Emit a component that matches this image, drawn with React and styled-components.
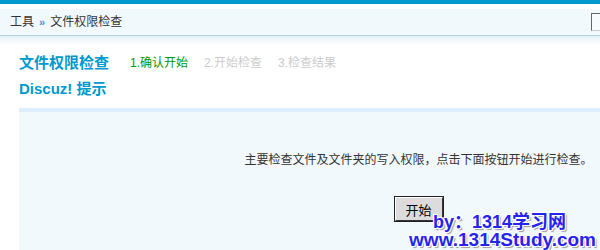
import React from "react";
import styled, { createGlobalStyle } from "styled-components";

const GlobalStyle = createGlobalStyle`
  html, body {
    margin: 0;
    padding: 0;
    background: #fff;
    overflow: hidden;
    height: 250px;
  }
  body {
    font-family: "Liberation Sans", "Noto Sans CJK SC", sans-serif;
    font-size: 12px;
    color: #333;
  }
`;

const Page = styled.div`
  position: relative;
  width: 600px;
  height: 250px;
  overflow: hidden;
`;

const TopStripe = styled.div`
  height: 4px;
  background: #0099cc;
  margin-bottom: 5px;
`;

const NavBar = styled.div`
  display: flex;
  align-items: center;
  height: 26px;
  padding-left: 10px;
  background: #f2f9fd;
  border-bottom: 1px solid #b4d2dc;
`;

const Crumbs = styled.div`
  display: flex;
  align-items: center;
  gap: 5px;
  line-height: 26px;
  color: #333;
`;

const Sep = styled.span`
  color: #4f8fd0;
  font-size: 11px;
  font-weight: bold;
`;

/* search field, only its left edge is visible in the frame */
const SearchInput = styled.input`
  margin-left: auto;
  width: 9px;
  height: 18px;
  box-sizing: border-box;
  border: 1px solid;
  border-color: #666 transparent #ccc #666;
  border-right: none;
  background: #f7fbfe;
  padding: 0;
`;

const Fade = styled.div`
  height: 9px;
  background: linear-gradient(#e3f1f9, #fff);
`;

const Content = styled.div`
  padding-left: 19px;
`;

const TitleRow = styled.div`
  display: flex;
  align-items: center;
  height: 20px;
  margin-top: 8px;
`;

const Heading = styled.h3`
  margin: 0;
  font-size: 15px;
  font-weight: bold;
  color: #0099cc;
  line-height: 20px;
`;

const Steps = styled.ul`
  display: flex;
  gap: 16px;
  margin: 0 0 0 21px;
  padding: 0;
  list-style: none;
`;

const Step = styled.li`
  color: ${(p) => (p.$current ? "#009900" : "#cccccc")};
  font-size: 12px;
  line-height: 20px;
`;

const Tip = styled(Heading)`
  margin-top: 6px;
`;

const Box = styled.div`
  margin-top: 9px;
  border-top: 4px solid #deeefa;
  background: #f2f9fd;
  height: 200px;
  padding-left: 218px;
  display: flex;
  flex-direction: column;
  align-items: center;
`;

const Message = styled.p`
  margin: 38px 0 0;
  line-height: 20px;
  color: #333;
  white-space: nowrap;
`;

const StartButton = styled.button`
  margin-top: 27px;
  width: 48px;
  height: 24px;
  padding: 0;
  border: 1px solid;
  border-color: #fff #333 #333 #fff;
  outline: 1px solid #222;
  background: #dcdcdc;
  font-family: "Noto Sans CJK SC", sans-serif;
  font-size: 13px;
  color: #000;
`;

const Watermark = styled.div`
  position: absolute;
  right: 4px;
  top: 214px;
  font-family: "Liberation Sans", "Noto Sans CJK SC", sans-serif;
  font-weight: bold;
  line-height: 17px;
  color: #2424ee;
  text-shadow: 1px 0 0 #fff, -1px 0 0 #fff, 0 1px 0 #fff, 0 -1px 0 #fff,
    1px 1px 0 #fff, -1px -1px 0 #fff, 1px -1px 0 #fff, -1px 1px 0 #fff,
    2px 2px 1px #999;
  text-align: right;
`;

const MarkLine = styled.div`
  white-space: nowrap;
  font-size: ${(p) => p.$size}px;
  padding-right: ${(p) => p.$pad || 0}px;
`;

const steps = [
  { label: "1.确认开始", current: true },
  { label: "2.开始检查" },
  { label: "3.检查结果" },
];

export default function App() {
  return (
    <Page>
      <GlobalStyle />
      <TopStripe />
      <NavBar>
        <Crumbs>
          <span>工具</span>
          <Sep>»</Sep>
          <span>文件权限检查</span>
        </Crumbs>
        <SearchInput type="text" />
      </NavBar>
      <Fade />
      <Content>
        <TitleRow>
          <Heading>文件权限检查</Heading>
          <Steps>
            {steps.map((s) => (
              <Step key={s.label} $current={s.current}>
                {s.label}
              </Step>
            ))}
          </Steps>
        </TitleRow>
        <Tip>Discuz! 提示</Tip>
        <Box>
          <Message>主要检查文件及文件夹的写入权限，点击下面按钮开始进行检查。</Message>
          <StartButton type="button">开始</StartButton>
        </Box>
      </Content>
      <Watermark>
        <MarkLine $size={18} $pad={30}>by：1314学习网</MarkLine>
        <MarkLine $size={19}>www.1314Study.com</MarkLine>
      </Watermark>
    </Page>
  );
}
